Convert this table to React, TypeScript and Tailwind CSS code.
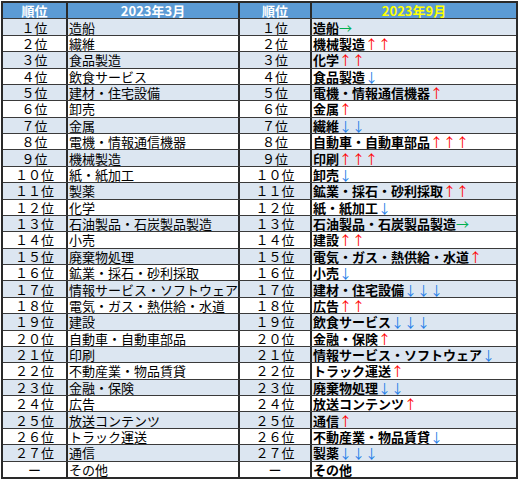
import React from "react";

type Arrow = { s: string; c: "r" | "b" | "g" };
const L = [
  "造船","繊維","食品製造","飲食サービス","建材・住宅設備","卸売","金属","電機・情報通信機器","機械製造","紙・紙加工","製薬","化学","石油製品・石炭製品製造","小売","廃棄物処理","鉱業・採石・砂利採取","情報サービス・ソフトウェア","電気・ガス・熱供給・水道","建設","自動車・自動車部品","印刷","不動産業・物品賃貸","金融・保険","広告","放送コンテンツ","トラック運送","通信","その他",
];
const R: [string, Arrow | null][] = [
  ["造船", { s: "→", c: "g" }],
  ["機械製造", { s: "↑↑", c: "r" }],
  ["化学", { s: "↑↑", c: "r" }],
  ["食品製造", { s: "↓", c: "b" }],
  ["電機・情報通信機器", { s: "↑", c: "r" }],
  ["金属", { s: "↑", c: "r" }],
  ["繊維", { s: "↓↓", c: "b" }],
  ["自動車・自動車部品", { s: "↑↑↑", c: "r" }],
  ["印刷", { s: "↑↑↑", c: "r" }],
  ["卸売", { s: "↓", c: "b" }],
  ["鉱業・採石・砂利採取", { s: "↑↑", c: "r" }],
  ["紙・紙加工", { s: "↓", c: "b" }],
  ["石油製品・石炭製品製造", { s: "→", c: "g" }],
  ["建設", { s: "↑↑", c: "r" }],
  ["電気・ガス・熱供給・水道", { s: "↑", c: "r" }],
  ["小売", { s: "↓", c: "b" }],
  ["建材・住宅設備", { s: "↓↓↓", c: "b" }],
  ["広告", { s: "↑↑", c: "r" }],
  ["飲食サービス", { s: "↓↓↓", c: "b" }],
  ["金融・保険", { s: "↑", c: "r" }],
  ["情報サービス・ソフトウェア", { s: "↓", c: "b" }],
  ["トラック運送", { s: "↑", c: "r" }],
  ["廃棄物処理", { s: "↓↓", c: "b" }],
  ["放送コンテンツ", { s: "↑", c: "r" }],
  ["通信", { s: "↑", c: "r" }],
  ["不動産業・物品賃貸", { s: "↓", c: "b" }],
  ["製薬", { s: "↓↓↓", c: "b" }],
  ["その他", null],
];

const fw = (n: number) =>
  String(n)
    .split("")
    .map((d) => String.fromCharCode(0xff10 + Number(d)))
    .join("");

const rank = (i: number) => (i < 27 ? fw(i + 1) + "位" : "ー");

function ArrowSpan({ a }: { a: Arrow }) {
  const cls =
    a.c === "r" ? "text-[#ff0000]" : a.c === "b" ? "text-[#1f7fe8]" : "text-[#00b050]";
  return <span className={`font-normal ${cls}`}>{a.s}</span>;
}

export default function App() {
  return (
    <div className="w-[520px] h-[481px] bg-white pl-[1px] pt-[1px]">
      <div
        className="w-[517px] h-[478px] border-2 border-[#2a2a2a] flex flex-col text-[13px] leading-[15px] text-black"
        style={{ fontFamily: '"Noto Sans CJK JP", "Noto Sans", sans-serif' }}
      >
        <div className="flex-1 min-h-0 flex bg-[#5b9bd5] text-white font-bold border-b border-[#3a3a3a]">
          <div className="w-[65px] border-r-2 border-[#2a2a2a] flex items-center justify-center">順位</div>
          <div className="w-[172px] border-r-2 border-[#2a2a2a] flex items-center justify-center">2023年3月</div>
          <div className="w-[72px] border-r-2 border-[#2a2a2a] flex items-center justify-center">順位</div>
          <div className="flex-1 flex items-center justify-center text-[#ffff00]">2023年9月</div>
        </div>
        {L.map((l, i) => {
          const r = R[i];
          const bg = i % 2 === 0 ? "bg-[#dce6f1]" : "bg-white";
          return (
            <div
              key={i}
              className={`flex-1 min-h-0 flex ${bg} ${i < L.length - 1 ? "border-b border-[#3a3a3a]" : ""}`}
            >
              <div className="w-[65px] border-r-2 border-[#2a2a2a] flex items-center justify-center">
                {rank(i)}
              </div>
              <div className="w-[172px] border-r-2 border-[#2a2a2a] flex items-center pl-[1px] whitespace-nowrap">
                {l}
              </div>
              <div className="w-[72px] border-r-2 border-[#2a2a2a] flex items-center justify-center">
                {rank(i)}
              </div>
              <div className="flex-1 flex items-center pl-[1px] font-bold whitespace-nowrap">
                {r[0]}
                {r[1] && <ArrowSpan a={r[1]} />}
              </div>
            </div>
          );
        })}
      </div>
    </div>
  );
}
